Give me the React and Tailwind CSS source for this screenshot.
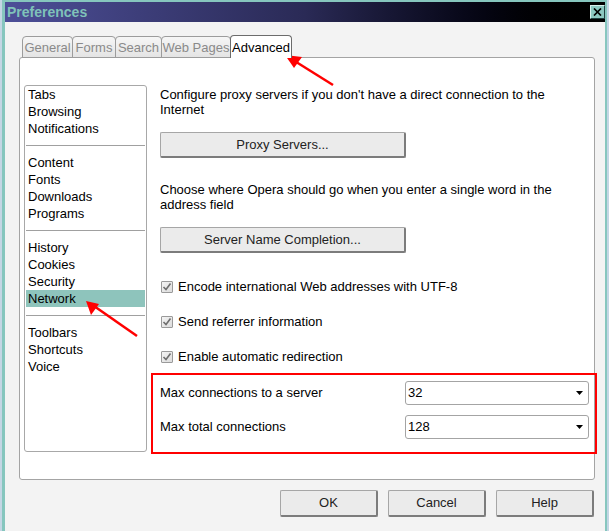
import React from "react";

const sections = [
  ["Tabs", "Browsing", "Notifications"],
  ["Content", "Fonts", "Downloads", "Programs"],
  ["History", "Cookies", "Security", "Network"],
  ["Toolbars", "Shortcuts", "Voice"],
];

const tabs = [
  { label: "General", w: "w-[51px]" },
  { label: "Forms", w: "w-[44px]" },
  { label: "Search", w: "w-[47px]" },
  { label: "Web Pages", w: "w-[70px]" },
];

const CheckRow = ({ label, className }) => (
  <div className={`flex items-center h-[17px] ${className}`}>
    <span className="ml-px w-[12px] h-[12px] border border-[#9a9a9a] rounded-[1px] bg-linear-to-br from-[#f4f4f4] to-[#dcdcdc] flex items-center justify-center">
      <svg width="10" height="10" viewBox="0 0 10 10">
        <path d="M1.5 5 L4 7.5 L8.5 1.5" stroke="#6e6e6e" strokeWidth="1.6" fill="none" />
      </svg>
    </span>
    <span className="ml-[5px]">{label}</span>
  </div>
);

const Select = ({ value }) => (
  <div className="w-[184px] h-[24px] border border-[#a4a4a4] rounded-[3px] bg-white flex items-center justify-between pl-[2px] pr-[4px]">
    <span>{value}</span>
    <svg width="8" height="5" viewBox="0 0 8 5">
      <path d="M0 0 H7 L3.5 4 Z" fill="#000" />
    </svg>
  </div>
);

const Button = ({ children, className }) => (
  <button className={`h-[26px] border border-[#a6a6a6] border-r-[#7c7c7c] border-b-[#7c7c7c] border-r-2 border-b-2 rounded-[2px] bg-[#ebebeb] text-[#222] ${className}`}>
    {children}
  </button>
);

export default function App() {
  return (
    <div className="relative w-[609px] h-[531px] overflow-hidden bg-[#c4d6e4] px-[2px] font-['Liberation_Sans',Arial,sans-serif] text-[13px] text-black">
      {/* window */}
      <div className="h-[560px] border-t-2 border-l-[3px] border-r-2 border-[#86c6be] bg-[#f3f3f3]">
        {/* title bar */}
        <div className="h-[20px] flex items-center justify-between bg-linear-to-r from-[#4d4f98] via-[#2a2a56] to-black pl-[2px]">
          <span className="text-[14px] font-bold text-[#7fc2b9] leading-none">Preferences</span>
          <span className="w-[15px] h-[14px] bg-[#8cc8c0] border border-t-[#d8f0ec] border-l-[#d8f0ec] border-r-[#204040] border-b-[#204040] flex items-center justify-center">
            <svg width="9" height="8" viewBox="0 0 9 8">
              <path d="M1 0.5 L8 7.5 M8 0.5 L1 7.5" stroke="#000" strokeWidth="1.7" />
            </svg>
          </span>
        </div>

        <div className="pl-[14px] pr-[10px] pt-[13px]">
          {/* tabs */}
          <div className="relative z-10 flex items-end ml-[3px] -mb-px">
            {tabs.map((t) => (
              <div
                key={t.label}
                className={`${t.w} h-[22px] pt-px border border-[#9c9c9c] rounded-t-[4px] bg-linear-to-b from-[#f6f6f6] to-[#e4e4e4] text-[#8a8a8a] flex items-center justify-center -mr-px`}
              >
                {t.label}
              </div>
            ))}
            <div className="w-[62px] h-[23px] pt-px border border-b-0 border-[#6c6c6c] rounded-t-[4px] bg-white flex items-center justify-center">
              Advanced
            </div>
          </div>

          {/* panel */}
          <div className="h-[423px] border border-[#a4a4a4] rounded-[3px] bg-white flex items-start">
            {/* category list */}
            <div className="mt-[27px] ml-[4px] w-[123px] h-[367px] border border-[#a8a8a8] rounded-[3px] px-px">
              {sections.map((group, gi) => (
                <div key={gi}>
                  {gi > 0 && <div className="my-[8px] h-px bg-[#a0a0a0]" />}
                  {group.map((item) => (
                    <div
                      key={item}
                      className={`h-[17px] leading-[17px] pl-[2px] ${item === "Network" ? "bg-[#8ec4bc]" : ""}`}
                    >
                      {item}
                    </div>
                  ))}
                </div>
              ))}
            </div>

            {/* settings */}
            <div className="ml-[13px] mt-[29px] flex flex-col">
              <p className="leading-[15px] whitespace-nowrap">
                Configure proxy servers if you don't have a direct connection to the
                <br />
                Internet
              </p>
              <Button className="mt-[15px] w-[246px]">Proxy Servers...</Button>
              <p className="mt-[24px] leading-[15px] whitespace-nowrap">
                Choose where Opera should go when you enter a single word in the
                <br />
                address field
              </p>
              <Button className="mt-[15px] w-[246px]">Server Name Completion...</Button>

              <CheckRow className="mt-[25px]" label="Encode international Web addresses with UTF-8" />
              <CheckRow className="mt-[18px]" label="Send referrer information" />
              <CheckRow className="mt-[18px]" label="Enable automatic redirection" />

              <div className="mt-[16px] flex items-center">
                <span className="w-[245px]">Max connections to a server</span>
                <Select value="32" />
              </div>
              <div className="mt-[10px] flex items-center">
                <span className="w-[245px]">Max total connections</span>
                <Select value="128" />
              </div>
            </div>
          </div>

          {/* dialog buttons */}
          <div className="mt-[10px] mr-px flex justify-end gap-[10px]">
            <Button className="w-[98px] h-[27px]">OK</Button>
            <Button className="w-[98px] h-[27px]">Cancel</Button>
            <Button className="w-[98px] h-[27px]">Help</Button>
          </div>
        </div>
      </div>

      {/* annotations */}
      <div className="absolute left-[151px] top-[373px] w-[446px] h-[81px] border-2 border-[#ff0000] pointer-events-none" />
      <svg className="absolute inset-0 pointer-events-none" width="609" height="531">
        <line x1="333" y1="85" x2="293" y2="60" stroke="#ff0000" strokeWidth="2.5" />
        <path d="M285 55 L302 57 L294 68 Z" fill="#ff0000" />
        <line x1="137" y1="336" x2="94" y2="306" stroke="#ff0000" strokeWidth="2.5" />
        <path d="M86 301 L99 304 L91 315 Z" fill="#ff0000" />
      </svg>
    </div>
  );
}
